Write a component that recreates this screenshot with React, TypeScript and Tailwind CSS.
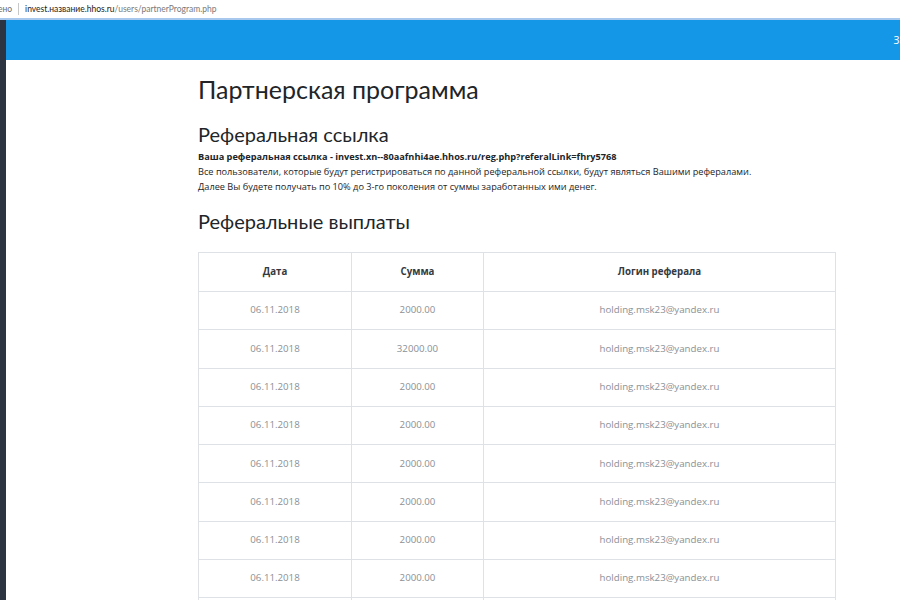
import React from "react";

interface Payout {
  date: string;
  amount: string;
  login: string;
}

const payouts: Payout[] = [
  { date: "06.11.2018", amount: "2000.00", login: "holding.msk23@yandex.ru" },
  { date: "06.11.2018", amount: "32000.00", login: "holding.msk23@yandex.ru" },
  { date: "06.11.2018", amount: "2000.00", login: "holding.msk23@yandex.ru" },
  { date: "06.11.2018", amount: "2000.00", login: "holding.msk23@yandex.ru" },
  { date: "06.11.2018", amount: "2000.00", login: "holding.msk23@yandex.ru" },
  { date: "06.11.2018", amount: "2000.00", login: "holding.msk23@yandex.ru" },
  { date: "06.11.2018", amount: "2000.00", login: "holding.msk23@yandex.ru" },
  { date: "06.11.2018", amount: "2000.00", login: "holding.msk23@yandex.ru" },
  { date: "06.11.2018", amount: "2000.00", login: "holding.msk23@yandex.ru" },
];

export default function App() {
  return (
    <div className="w-[900px] h-[600px] overflow-hidden bg-white font-['Open_Sans',sans-serif]">
      {/* Address bar */}
      <div className="h-[20px] flex items-center text-[8.5px] leading-none border-b-2 border-[#a9c8ee] bg-white font-['Lato',sans-serif]">
        <span className="text-[#6b6b6b] -ml-[2px]">ено</span>
        <span className="mx-[6px] h-[12px] w-px bg-[#c8c8c8]" />
        <span className="text-[#222]">invest.название.hhos.ru</span>
        <span className="text-[#7a7a7a]">/users/partnerProgram.php</span>
      </div>

      <div className="flex h-[580px]">
        {/* Left dark strip */}
        <div className="w-[6px] bg-[#2b3440] shrink-0" />

        <div className="flex-1 flex flex-col min-w-0">
          {/* Header */}
          <div className="h-[40px] shrink-0 bg-[#1497e6] flex items-center justify-end">
            <span className="text-white text-[10px] mr-[-5px]">За</span>
          </div>

          {/* Content */}
          <div className="pl-[192px] pt-[13px]">
            <h1 className="text-[25px] leading-[32px] text-[#212529] font-['Lato',sans-serif]">
              Партнерская программа
            </h1>
            <h2 className="mt-[16px] text-[20px] leading-[26px] text-[#212529] font-['Lato',sans-serif]">
              Реферальная ссылка
            </h2>
            <div className="mt-[2px] text-[9.2px] leading-[15px] text-[#212529]">
              <p className="font-bold">
                Ваша реферальная ссылка - invest.xn--80aafnhi4ae.hhos.ru/reg.php?referalLink=fhry5768
              </p>
              <p>
                Все пользователи, которые будут регистрироваться по данной реферальной ссылки, будут являться Вашими рефералами.
              </p>
              <p>Далее Вы будете получать по 10% до 3-го поколения от суммы заработанных ими денег.</p>
            </div>
            <h2 className="mt-[14px] text-[20px] leading-[26px] text-[#212529] font-['Lato',sans-serif]">
              Реферальные выплаты
            </h2>

            <table className="mt-[18px] w-[638px] border-collapse text-[9.7px] text-center">
              <thead>
                <tr className="h-[39px]">
                  <th className="w-[153px] border border-[#dee2e6] font-bold text-[#343a40]">Дата</th>
                  <th className="w-[132px] border border-[#dee2e6] font-bold text-[#343a40]">Сумма</th>
                  <th className="border border-[#dee2e6] font-bold text-[#343a40]">Логин реферала</th>
                </tr>
              </thead>
              <tbody>
                {payouts.map((p, i) => (
                  <tr key={i} className="h-[38.3px]">
                    <td className="border border-[#dee2e6] text-[#8a9096]">{p.date}</td>
                    <td className="border border-[#dee2e6] text-[#8a9096]">{p.amount}</td>
                    <td className="border border-[#dee2e6] text-[#8a9096]">{p.login}</td>
                  </tr>
                ))}
              </tbody>
            </table>
          </div>
        </div>
      </div>
    </div>
  );
}
